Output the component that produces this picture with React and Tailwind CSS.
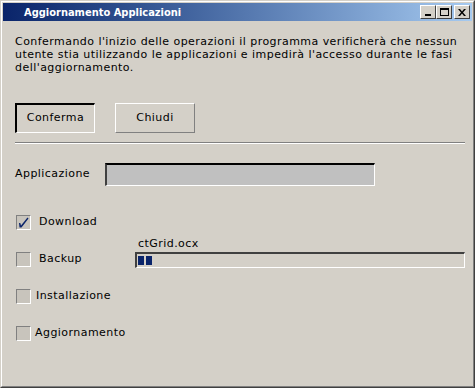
import React from "react";

const font = { fontFamily: '"DejaVu Sans", sans-serif', letterSpacing: "0.45px" };
const titleFont = { fontFamily: '"DejaVu Sans Condensed", "DejaVu Sans", sans-serif', letterSpacing: "0px" };

function Check({ checked }) {
  return (
    <div className="shrink-0 w-[15px] h-[15px] border border-t-[#808080] border-l-[#808080] border-b-white border-r-white bg-[#c8c4bc] flex items-center justify-center">
      {checked && (
        <svg width="13" height="13" viewBox="0 0 13 13">
          <path d="M2.5 11.5 L4.5 11.5 L11.5 2.5 L10.5 1.5 L4 9.5 L3.3 7 L2 7 Z" fill="#0a246a" />
        </svg>
      )}
    </div>
  );
}

function TitleBtn({ children, className = "" }) {
  return (
    <div className={"w-[16px] h-[14px] bg-[#d4d0c8] border border-t-white border-l-white border-b-[#404040] border-r-[#404040] flex items-center justify-center " + className}>
      {children}
    </div>
  );
}

export default function App() {
  return (
    <div className="w-[475px] h-[388px] bg-[#d4d0c8] text-black text-[11px]" style={font}>
      <div className="w-full h-full border border-t-[#d4d0c8] border-l-[#d4d0c8] border-b-[#404040] border-r-[#404040]">
        <div className="w-full h-full border border-t-white border-l-white border-b-[#808080] border-r-[#808080] p-px flex flex-col">
          <div className="shrink-0 h-[18px] bg-gradient-to-r from-[#0a246a] to-[#a6caf0] flex items-center pl-[21px] pr-[2px]">
            <span className="text-white font-bold text-[11px] leading-none" style={titleFont}>Aggiornamento Applicazioni</span>
            <div className="ml-auto flex items-center">
              <TitleBtn>
                <div className="w-[6px] h-[2px] bg-black mt-[6px] mr-[1px]" />
              </TitleBtn>
              <TitleBtn>
                <div className="w-[9px] h-[8px] border border-black border-t-2" />
              </TitleBtn>
              <TitleBtn className="ml-[2px]">
                <svg width="8" height="7" viewBox="0 0 8 7">
                  <path d="M0 0 L2 0 L4 2.5 L6 0 L8 0 L5 3.5 L8 7 L6 7 L4 4.5 L2 7 L0 7 L3 3.5 Z" fill="black" />
                </svg>
              </TitleBtn>
            </div>
          </div>

          <div className="pl-[12px] pr-[6px] pt-[14px] leading-[13px] h-[53px] shrink-0">
            <p>
              Confermando l'inizio delle operazioni il programma verificherà che nessun utente stia utilizzando le applicazioni e impedirà l'accesso durante le fasi dell'aggiornamento.
            </p>
          </div>

          <div className="flex gap-[20px] pl-[12px] mt-[29px]">
            <div className="w-[80px] h-[30px] border-t-2 border-l-2 border-t-black border-l-black border-b border-r border-b-white border-r-white flex items-center justify-center">
              Conferma
            </div>
            <div className="w-[80px] h-[30px] border border-t-white border-l-white border-b-[#808080] border-r-[#808080] flex items-center justify-center">
              Chiudi
            </div>
          </div>

          <div className="ml-[12px] mr-[7px] mt-[9px] h-[2px] border-t border-t-[#808080] border-b border-b-white" />

          <div className="flex items-center pl-[12px] mt-[19px]">
            <span className="w-[90px]">Applicazione</span>
            <div className="w-[270px] h-[23px] bg-[#c0c0c0] border-t-2 border-l-2 border-t-black border-l-[#404040] border-b border-r border-b-white border-r-white" />
          </div>

          <div className="flex flex-col pl-[13px] mt-[29px]">
            <div className="flex items-center h-[15px]">
              <Check checked />
              <span className="ml-[8px]">Download</span>
            </div>
            <div className="flex items-center h-[15px] mt-[22px]">
              <Check />
              <span className="ml-[8px] w-[96px]">Backup</span>
              <div className="relative">
                <span className="absolute -top-[15px] left-[3px] leading-[13px]">ctGrid.ocx</span>
                <div className="w-[330px] h-[16px] border-t-2 border-l-2 border-t-[#404040] border-l-[#404040] border-b border-r border-b-white border-r-white flex items-center gap-[2px] pl-[1px]">
                  <div className="w-[6px] h-[9px] bg-[#0a246a]" />
                  <div className="w-[6px] h-[9px] bg-[#0a246a]" />
                </div>
              </div>
            </div>
            <div className="flex items-center h-[15px] mt-[22px]">
              <Check />
              <span className="ml-[5px]">Installazione</span>
            </div>
            <div className="flex items-center h-[15px] mt-[22px]">
              <Check />
              <span className="ml-[4px]">Aggiornamento</span>
            </div>
          </div>
        </div>
      </div>
    </div>
  );
}
